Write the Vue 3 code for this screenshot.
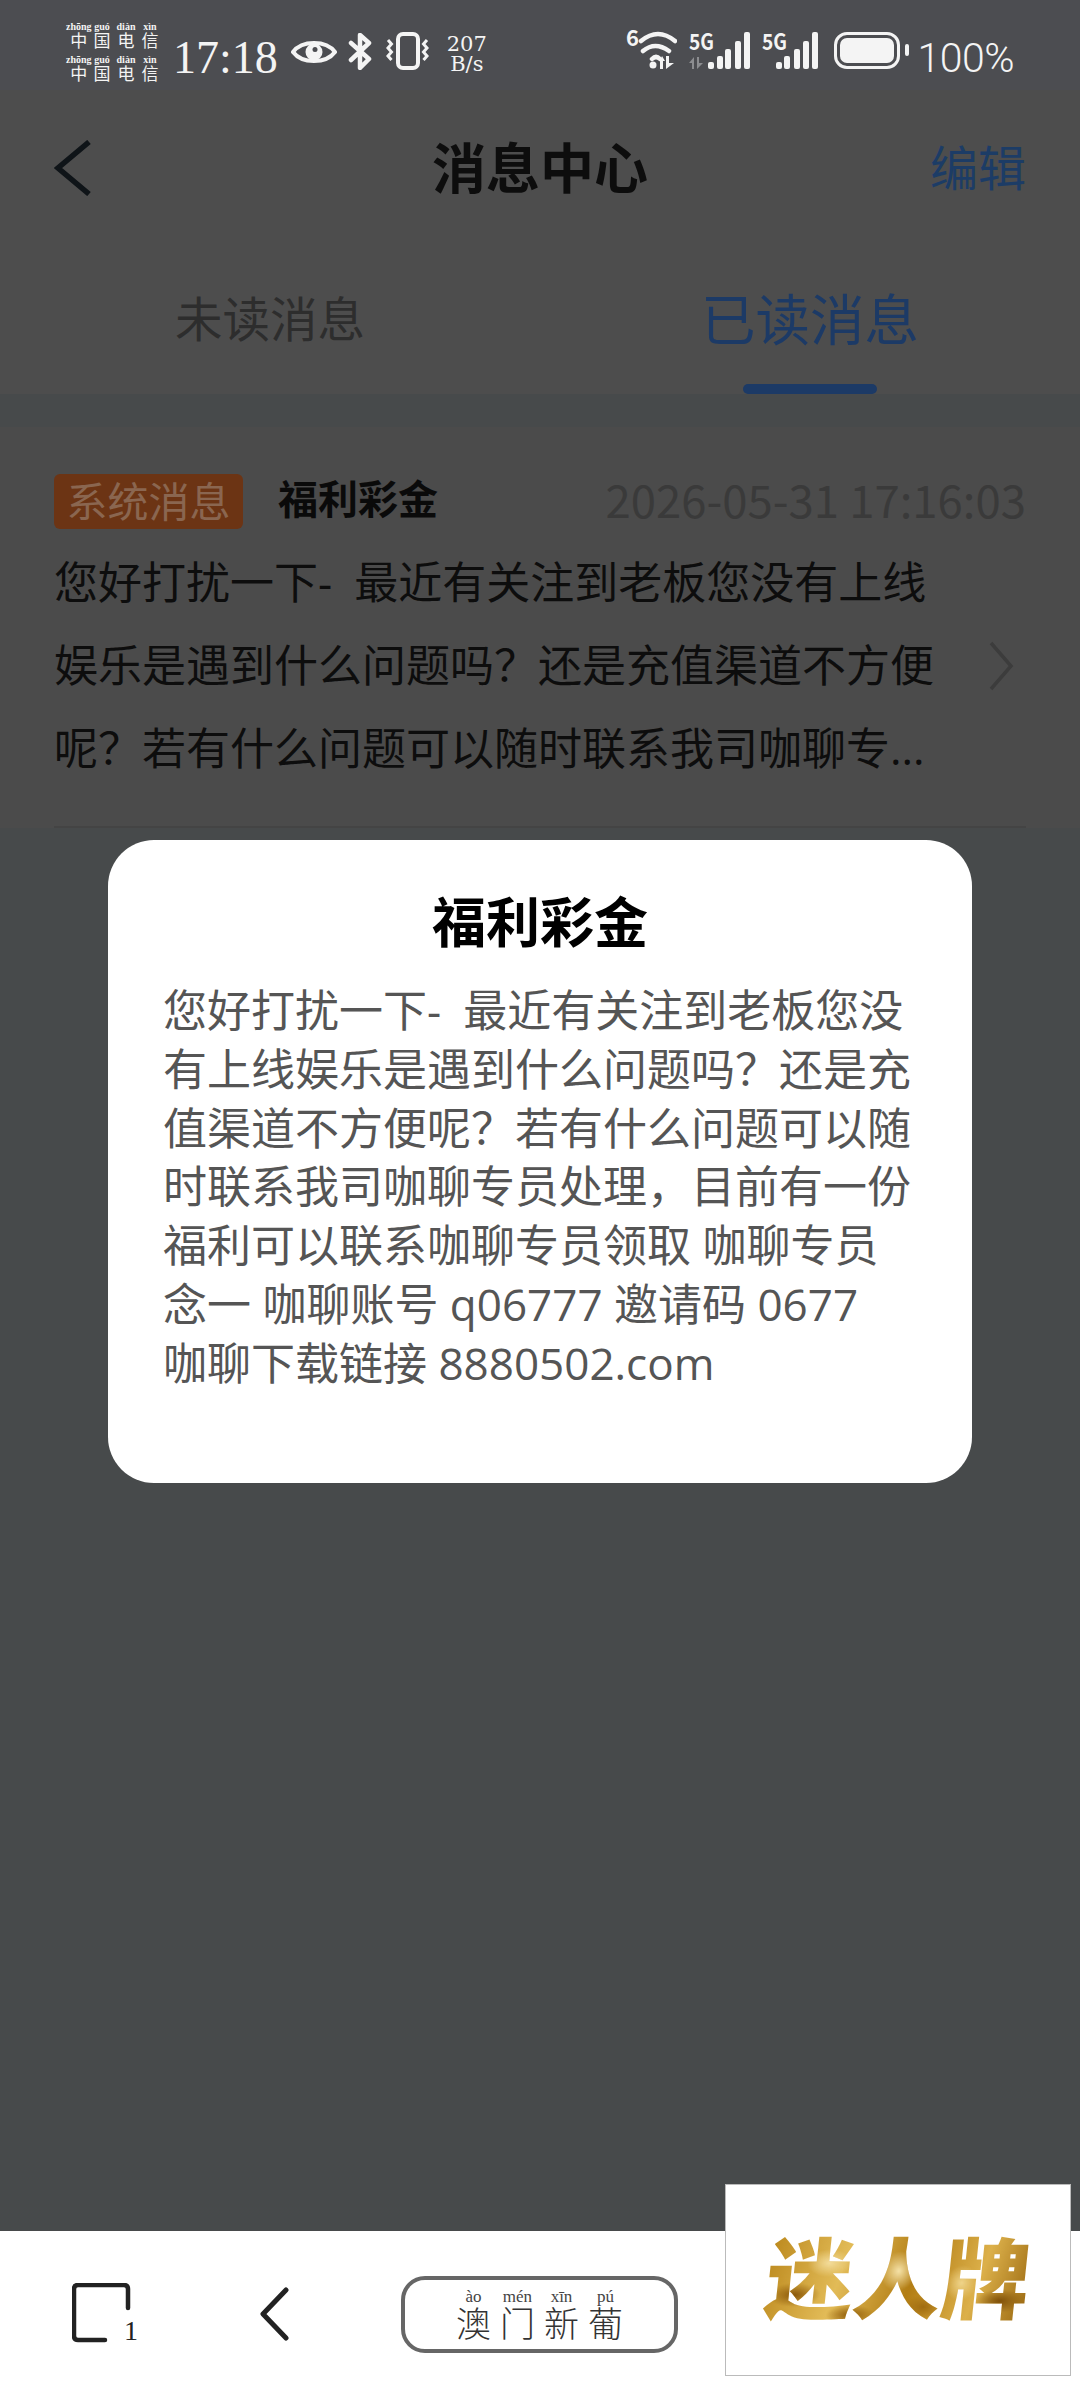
<script setup>
const carriers = [
  [['中', 'zhōng'], ['国', 'guó'], ['电', 'diàn'], ['信', 'xìn']],
  [['中', 'zhōng'], ['国', 'guó'], ['电', 'diàn'], ['信', 'xìn']]
]
const adChars = [['澳', 'ào'], ['门', 'mén'], ['新', 'xīn'], ['葡', 'pú']]
const sigBars = [[19, 30], [28, 24], [36, 17], [46, 9], [55, 0]]
const sigBars2 = [[14, 30], [22, 24], [32, 17], [41, 9], [50, 0]]
</script>

<template>
  <div class="page">
    <div class="status">
      <div class="carrier">
        <div v-for="(row, i) in carriers" :key="i" class="carrier-row">
          <ruby v-for="c in row" :key="c[0]">{{ c[0] }}<rt>{{ c[1] }}</rt></ruby>
        </div>
      </div>
      <span class="time">17:18</span>
      <svg class="eye" width="46" height="30" viewBox="0 0 46 30">
        <path d="M2 15C11 3 35 3 44 15C35 27 11 27 2 15Z" fill="none" stroke="#f4f4f4" stroke-width="4" stroke-linejoin="round" />
        <circle cx="23" cy="15" r="8.5" fill="#f4f4f4" />
        <circle cx="24" cy="12.5" r="2.5" fill="#4c4d51" />
      </svg>
      <svg class="bt" width="25" height="37" viewBox="0 0 25 37">
        <path d="M3 10L21 26L12 35V2L21 10L3 27" fill="none" stroke="#f4f4f4" stroke-width="4.5" stroke-linecap="round" stroke-linejoin="round" />
      </svg>
      <svg class="vib" width="43" height="38" viewBox="0 0 43 38">
        <rect x="12" y="2" width="20" height="34" rx="5" fill="none" stroke="#f4f4f4" stroke-width="4" />
        <path d="M2 8L5.5 12L2 16L5.5 20L2 24L5.5 28M41 8L37.5 12L41 16L37.5 20L41 24L37.5 28" fill="none" stroke="#f4f4f4" stroke-width="3" />
      </svg>
      <div class="speed"><span>207</span><span>B/s</span></div>
      <svg class="wifi" width="53" height="51" viewBox="-3 -12 53 51">
        <text x="-1" y="16" class="svg-num">6</text>
        <path d="M14 11Q31 -3 48 11M16 21Q28 11 42 21M25 29Q29 25 33 29" fill="none" stroke="#f4f4f4" stroke-width="4.5" stroke-linecap="round" />
        <circle cx="26" cy="35" r="3.5" fill="#f4f4f4" />
        <path d="M33 31V39H36V31H38L35 26ZM39 26V39L47 33H42V26Z" fill="#f4f4f4" />
      </svg>
      <svg class="sig1" width="62" height="48" viewBox="0 -10 62 48">
        <text x="0" y="18" class="svg-5g" textLength="25" lengthAdjust="spacingAndGlyphs">5G</text>
        <path d="M0 31L5 25V37H3V31ZM8 25V37L14 31H10V25Z" fill="#8c8d90" />
        <rect v-for="b in sigBars" :key="b[0]" :x="b[0]" :y="b[1]" width="6" :height="37 - b[1]" rx="2" fill="#f4f4f4" />
      </svg>
      <svg class="sig2" width="57" height="48" viewBox="0 -10 57 48">
        <text x="0" y="18" class="svg-5g" textLength="25" lengthAdjust="spacingAndGlyphs">5G</text>
        <rect v-for="b in sigBars2" :key="b[0]" :x="b[0]" :y="b[1]" width="6" :height="37 - b[1]" rx="2" fill="#f4f4f4" />
      </svg>
      <div class="battery"><i></i></div>
      <span class="battery-tip"></span>
      <span class="pct">100%</span>
    </div>

    <div class="head">
      <div class="nav">
        <svg class="back" width="38" height="56" viewBox="0 0 38 56">
          <path d="M35 2L4 28L35 54" fill="none" stroke="#0f1418" stroke-width="5.5" />
        </svg>
        <span class="nav-title">消息中心</span>
        <span class="nav-edit">编辑</span>
      </div>
      <div class="tabs">
        <div class="tab"><span class="tab-off">未读消息</span></div>
        <div class="tab"><span class="tab-on">已读消息</span><i class="tab-line"></i></div>
      </div>
    </div>

    <div class="card">
      <div class="card-top">
        <span class="tag">系统消息</span>
        <span class="card-title">福利彩金</span>
        <span class="card-date">2026-05-31 17:16:03</span>
      </div>
      <div class="card-body">
        <p class="card-text">您好打扰一下-&#8194;最近有关注到老板您没有上线娱乐是遇到什么问题吗？还是充值渠道不方便呢？若有什么问题可以随时联系我司咖聊专...</p>
        <svg class="more" width="26" height="50" viewBox="0 0 26 50">
          <path d="M3 2L23 25L3 48" fill="none" stroke="#3c3c3c" stroke-width="3.5" />
        </svg>
      </div>
    </div>

    <div class="fill"></div>

    <div class="bottom">
      <div class="tabs-btn">
        <svg width="62" height="60" viewBox="0 0 62 60">
          <path d="M33 57H6Q2 57 2 53V6Q2 2 6 2H52Q56 2 56 6V25" fill="none" stroke="#222" stroke-width="4.5" stroke-linecap="round" />
        </svg>
        <span class="tabs-num">1</span>
      </div>
      <svg class="bottom-back" width="30" height="54" viewBox="0 0 30 54">
        <path d="M27 3L4 27L27 51" fill="none" stroke="#222" stroke-width="5" stroke-linecap="round" stroke-linejoin="round" />
      </svg>
      <div class="pill">
        <ruby v-for="c in adChars" :key="c[0]">{{ c[0] }}<rt>{{ c[1] }}</rt></ruby>
      </div>
    </div>

    <div class="dialog">
      <div class="dialog-title">福利彩金</div>
      <p class="dialog-text">您好打扰一下-&#8194;最近有关注到老板您没有上线娱乐是遇到什么问题吗？还是充值渠道不方便呢？若有什么问题可以随时联系我司咖聊专员处理，目前有一份福利可以联系咖聊专员领取 咖聊专员念一 咖聊账号 q06777 邀请码 0677<br>咖聊下载链接 8880502.com</p>
    </div>

    <div class="ad"><span class="ad-text">迷人牌</span></div>
  </div>
</template>

<style>
body {
  margin: 0;
}
</style>

<style scoped>
.page {
  position: relative;
  width: 1080px;
  height: 2400px;
  overflow: hidden;
  display: flex;
  flex-direction: column;
  background: #474a4b;
  font-family: "Open Sans", "Noto Sans CJK SC", sans-serif;
}
p {
  margin: 0;
}

/* status bar */
.status {
  height: 90px;
  flex: none;
  display: flex;
  align-items: flex-start;
  padding: 0 66px;
  box-sizing: border-box;
  background: #4c4d51;
  color: #f4f4f4;
}
.carrier {
  margin-top: 17px;
  width: 96px;
}
.carrier-row {
  display: flex;
  height: 33px;
  align-items: flex-end;
  font-size: 17px;
  line-height: 18px;
}
.carrier-row ruby {
  width: 24px;
  text-align: center;
}
.carrier-row rt {
  font-family: "Liberation Serif", serif;
  font-size: 10px;
  line-height: 10px;
  font-weight: 700;
}
.time {
  margin: 31px 0 0 11px;
  font-family: "Liberation Serif", serif;
  font-size: 46px;
  line-height: 53px;
}
.eye {
  margin: 37px 0 0 13px;
}
.bt {
  margin: 33px 0 0 11px;
}
.vib {
  margin: 32px 0 0 13px;
}
.speed {
  margin: 34px 0 0 17px;
  width: 42px;
  display: flex;
  flex-direction: column;
  align-items: center;
  font-family: "DejaVu Serif", serif;
  font-size: 21px;
  line-height: 20px;
}
.wifi {
  margin: 18px -3px 0 auto;
}
.sig1 {
  margin: 22px 0 0 15px;
}
.sig2 {
  margin: 22px 0 0 11px;
}
.svg-num,
.svg-5g {
  font-family: "Noto Sans CJK SC", sans-serif;
  font-weight: 700;
  font-size: 22px;
  fill: #f4f4f4;
}
.battery {
  margin: 32px 0 0 15px;
  width: 66px;
  height: 37px;
  box-sizing: border-box;
  border: 3px solid #f4f4f4;
  border-radius: 13px;
  padding: 3px;
}
.battery i {
  display: block;
  height: 100%;
  border-radius: 7px;
  background: #f4f4f4;
}
.battery-tip {
  margin: 44px 0 0 5px;
  width: 4px;
  height: 12px;
  border-radius: 2px;
  background: #f4f4f4;
}
.pct {
  margin: 34px 0 0 8px;
  font-family: "Roboto", sans-serif;
  font-weight: 300;
  font-size: 41px;
  line-height: 48px;
  letter-spacing: -0.5px;
}

/* header */
.head {
  flex: none;
  background: #4d4d4d;
  height: 304px;
}
.nav {
  height: 156px;
  display: grid;
  grid-template-columns: 1fr auto 1fr;
  align-items: center;
  padding: 0 54px;
}
.nav-title {
  font-size: 54px;
  line-height: 70px;
  font-weight: 700;
  color: #0d0d0d;
}
.nav-edit {
  justify-self: end;
  font-size: 48px;
  line-height: 70px;
  color: #1c3c66;
}
.tabs {
  display: grid;
  grid-template-columns: 540px 540px;
}
.tab {
  height: 148px;
  display: flex;
  flex-direction: column;
  align-items: center;
  position: relative;
}
.tab-off {
  margin-top: 38px;
  font-size: 47.5px;
  line-height: 70px;
  color: #2d2d2d;
}
.tab-on {
  margin-top: 34px;
  font-size: 54.5px;
  line-height: 78px;
  color: #1c3a66;
}
.tab-line {
  position: absolute;
  bottom: 0;
  width: 134px;
  height: 10px;
  border-radius: 5px;
  background: #1c3a66;
}

/* message card */
.card {
  margin-top: 33px;
  flex: none;
  height: 401px;
  box-sizing: border-box;
  background: #4b4b4b;
  padding: 47px 54px 0;
}
.card-top {
  display: flex;
  align-items: center;
  height: 55px;
}
.tag {
  width: 189px;
  height: 55px;
  border-radius: 6px;
  background: #6c3414;
  color: #8a6650;
  font-size: 41px;
  line-height: 55px;
  text-align: center;
}
.card-title {
  margin: 0 0 6px 35px;
  font-size: 40px;
  line-height: 55px;
  font-weight: 700;
  color: #0a0a0a;
}
.card-date {
  margin: 0 0 6px auto;
  font-family: "Noto Sans CJK SC", sans-serif;
  font-size: 45.5px;
  line-height: 55px;
  color: #3a3a3a;
}
.card-body {
  position: relative;
  margin-top: 12px;
  padding-bottom: 36px;
  border-bottom: 2px solid #444;
}
.card-text {
  width: 881px;
  font-size: 44px;
  line-height: 83px;
  color: #0d0d0d;
}
.more {
  position: absolute;
  right: 12px;
  top: 100px;
}

.fill {
  flex: 1;
}

/* bottom bar */
.bottom {
  flex: none;
  height: 169px;
  background: #fff;
  display: flex;
  align-items: flex-start;
  padding-left: 72px;
}
.tabs-btn {
  position: relative;
  margin-top: 52px;
  width: 62px;
  height: 60px;
}
.tabs-num {
  position: absolute;
  left: 52px;
  top: 34px;
  font-family: "Liberation Serif", serif;
  font-size: 28px;
  line-height: 28px;
  color: #222;
}
.bottom-back {
  margin: 56px 0 0 125px;
}
.pill {
  margin: 45px 0 0 112px;
  width: 277px;
  height: 77px;
  box-sizing: border-box;
  border: 4px solid #666;
  border-radius: 24px;
  display: flex;
  justify-content: center;
  align-items: flex-end;
  gap: 9px;
  padding-bottom: 7px;
  font-size: 35px;
  line-height: 36px;
  font-weight: 300;
  color: #333;
}
.pill rt {
  font-family: "Liberation Serif", serif;
  font-size: 17px;
  line-height: 16px;
  color: #444;
}

/* dialog */
.dialog {
  position: absolute;
  left: 108px;
  top: 840px;
  width: 864px;
  height: 643px;
  box-sizing: border-box;
  border-radius: 46px;
  background: #fff;
  padding: 40px 55px 0;
}
.dialog-title {
  text-align: center;
  font-size: 54px;
  line-height: 84px;
  font-weight: 700;
  color: #000;
}
.dialog-text {
  margin-top: 17px;
  font-size: 44px;
  line-height: 58.8px;
  color: #555;
}

/* ad */
.ad {
  position: absolute;
  left: 725px;
  top: 2184px;
  width: 346px;
  height: 192px;
  box-sizing: border-box;
  border: 1px solid #bbb;
  background: #fff;
  display: flex;
  justify-content: center;
  padding-top: 38px;
}
.ad-text {
  display: block;
  height: 110px;
  font-size: 88px;
  line-height: 110px;
  font-weight: 900;
  transform: skewX(-6deg);
  color: transparent;
  background:
    radial-gradient(ellipse 26px 12px at 30px 72px, #8a5708 0%, transparent 100%),
    radial-gradient(ellipse 22px 14px at 62px 40px, #f3dc9a 0%, transparent 100%),
    radial-gradient(ellipse 24px 10px at 88px 92px, #8f5c0a 0%, transparent 100%),
    radial-gradient(ellipse 18px 20px at 132px 48px, #f5e2a8 0%, transparent 100%),
    radial-gradient(ellipse 20px 12px at 160px 84px, #a06c10 0%, transparent 100%),
    radial-gradient(ellipse 16px 18px at 196px 60px, #efd48a 0%, transparent 100%),
    radial-gradient(ellipse 24px 12px at 236px 78px, #7f5008 0%, transparent 100%),
    linear-gradient(105deg, #b98519 0%, #e2bb57 30%, #b27d14 55%, #dcb04a 78%, #96640d 100%);
  -webkit-background-clip: text;
  background-clip: text;
}
</style>
